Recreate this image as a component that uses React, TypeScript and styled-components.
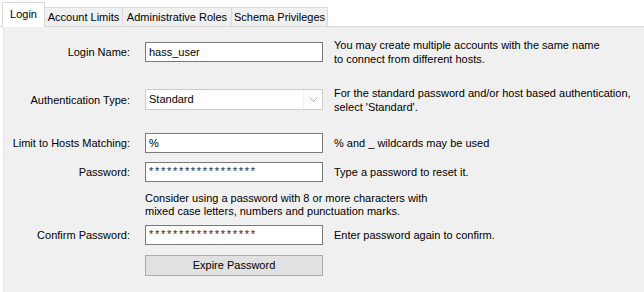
import React from 'react'
import styled, { createGlobalStyle } from 'styled-components'

const GlobalStyle = createGlobalStyle`
    html, body {
        margin: 0;
        padding: 0;
        background: #ffffff;
        font-family: "Liberation Sans", Arial, sans-serif;
        font-size: 11px;
        color: #000000;
    }
`

const Window = styled.div`
    width: 644px;
    height: 292px;
    overflow: hidden;
    display: flex;
    flex-direction: column;
    background: #ffffff;
`

const TabBar = styled.div`
    display: flex;
    align-items: flex-end;
    height: 27px;
    padding-left: 2px;
    border-bottom: 1px solid #d9d9d9;
    box-sizing: border-box;
`

const Tab = styled.div<{ active?: boolean; w: number }>`
    box-sizing: border-box;
    width: ${p => p.w}px;
    height: ${p => p.active ? '25px' : '19px'};
    margin-bottom: ${p => p.active ? '-1px' : '0'};
    padding-top: ${p => p.active ? '5px' : '3px'};
    background: ${p => p.active ? '#ffffff' : '#f0f0f0'};
    border-top: 1px solid #d9d9d9;
    border-right: 1px solid #d9d9d9;
    border-left: ${p => p.active ? '1px solid #d9d9d9' : 'none'};
    text-align: center;
    line-height: 13px;
    white-space: nowrap;
    position: relative;
    z-index: ${p => p.active ? 1 : 0};
`

const Panel = styled.div`
    flex: 1;
    margin-left: 3px;
    background: #f0f0f0;
    border-left: 1px solid #e3e3e3;
    padding-top: 15px;
    display: flex;
    flex-direction: column;
`

const Row = styled.div<{ top?: number; h?: number }>`
    display: grid;
    grid-template-columns: 126px 182px 1fr;
    grid-template-rows: ${p => p.h ?? 20}px;
    column-gap: 11px;
    margin-top: ${p => p.top ?? 0}px;
`

const Label = styled.div`
    display: flex;
    align-items: center;
    justify-content: flex-end;
    white-space: nowrap;
`

const Field = styled.div`
    box-sizing: border-box;
    margin-left: 4px;
    background: #ffffff;
    border: 1px solid #7a7a7a;
    padding: 0 3px;
    line-height: 18px;
    white-space: nowrap;
`

const Stars = styled(Field)`
    font-size: 11px;
    letter-spacing: 1.7px;
    color: #1b2a48;
    line-height: 17px;
`

const Select = styled.div`
    box-sizing: border-box;
    margin-left: 4px;
    background: #ffffff;
    border: 1px solid #cccccc;
    display: flex;
    align-items: stretch;
`

const SelectValue = styled.div`
    flex: 1;
    padding: 0 3px;
    line-height: 19px;
    border-right: 1px solid #f2f2f2;
`

const SelectArrow = styled.div`
    width: 18px;
    display: flex;
    align-items: center;
    justify-content: center;
`

const Help = styled.div`
    display: flex;
    flex-direction: column;
    justify-content: center;
    line-height: 14px;
    white-space: nowrap;
`

const Note = styled.div`
    margin: 10px 0 0 141px;
    line-height: 13px;
    white-space: nowrap;
`

const Button = styled.div`
    box-sizing: border-box;
    margin-left: 4px;
    background: #e1e1e1;
    border: 1px solid #adadad;
    text-align: center;
    line-height: 19px;
`

const Empty = styled.div``

const App: React.FC = () => {
    return (
        <Window>
            <GlobalStyle />
            <TabBar>
                <Tab active w={43}>Login</Tab>
                <Tab w={78}>Account Limits</Tab>
                <Tab w={109}>Administrative Roles</Tab>
                <Tab w={96}>Schema Privileges</Tab>
            </TabBar>
            <Panel>
                <Row>
                    <Label>Login Name:</Label>
                    <Field>hass_user</Field>
                    <Help>
                        <span>You may create multiple accounts with the same name</span>
                        <span>to connect from different hosts.</span>
                    </Help>
                </Row>
                <Row top={27} h={21}>
                    <Label>Authentication Type:</Label>
                    <Select>
                        <SelectValue>Standard</SelectValue>
                        <SelectArrow>
                            <svg width="9" height="6" viewBox="0 0 9 6">
                                <path d="M0.5 0.5 L4.5 4.5 L8.5 0.5" fill="none" stroke="#b4b4b4" strokeWidth="1" />
                            </svg>
                        </SelectArrow>
                    </Select>
                    <Help>
                        <span>For the standard password and/or host based authentication,</span>
                        <span>select 'Standard'.</span>
                    </Help>
                </Row>
                <Row top={23}>
                    <Label>Limit to Hosts Matching:</Label>
                    <Field>%</Field>
                    <Help>% and _ wildcards may be used</Help>
                </Row>
                <Row top={9}>
                    <Label>Password:</Label>
                    <Stars>******************</Stars>
                    <Help>Type a password to reset it.</Help>
                </Row>
                <Note>Consider using a password with 8 or more characters with<br />mixed case letters, numbers and punctuation marks.</Note>
                <Row top={7}>
                    <Label>Confirm Password:</Label>
                    <Stars>******************</Stars>
                    <Help>Enter password again to confirm.</Help>
                </Row>
                <Row top={10} h={21}>
                    <Empty />
                    <Button>Expire Password</Button>
                    <Empty />
                </Row>
            </Panel>
        </Window>
    )
}

export default App
